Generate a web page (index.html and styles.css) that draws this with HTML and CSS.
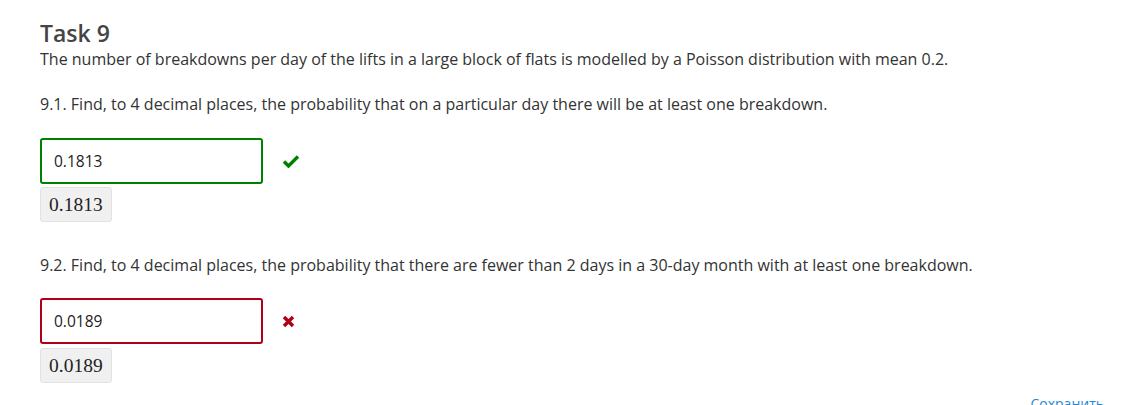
FILE: index.html
```html
<!DOCTYPE html>
<html>
<head>
<meta charset="utf-8">
<link rel="stylesheet" href="styles.css">
</head>
<body>
<div class="task">
  <h2 class="title">Task 9</h2>
  <p class="intro">The number of breakdowns per day of the lifts in a large block of flats is modelled by a Poisson distribution with mean 0.2.</p>

  <div class="part first">
    <p class="question">9.1. Find, to 4 decimal places, the probability that on a particular day there will be at least one breakdown.</p>
    <div class="answer-row">
      <input class="answer correct" type="text" value="0.1813">
      <svg class="mark" width="18" height="14" viewBox="0 0 18 14"><path d="M2 7.5 L6.5 12 L16 2.5" fill="none" stroke="#008000" stroke-width="3.4"/></svg>
    </div>
    <div class="preview">0.1813</div>
  </div>

  <div class="part second">
    <p class="question">9.2. Find, to 4 decimal places, the probability that there are fewer than 2 days in a 30-day month with at least one breakdown.</p>
    <div class="answer-row">
      <input class="answer wrong" type="text" value="0.0189">
      <svg class="mark cross" width="13" height="13" viewBox="0 0 13 13"><path d="M2 2 L11 11 M11 2 L2 11" fill="none" stroke="#b00018" stroke-width="3.4"/></svg>
    </div>
    <div class="preview">0.0189</div>
  </div>

  <div class="footer"><a class="save" href="#">Сохранить</a></div>
</div>
</body>
</html>
```
FILE: styles.css
```css
html, body {
  margin: 0;
  padding: 0;
  background: #fff;
}
body {
  font-family: "Open Sans", "Liberation Sans", sans-serif;
  font-size: 16px;
  color: #333;
  overflow: hidden;
}
.task {
  padding: 18px 0 0 40px;
}
.title {
  margin: 0;
  font-size: 23px;
  font-weight: 600;
  line-height: 30px;
  color: #444;
}
.intro {
  margin: 0;
  line-height: 22px;
}
.part.first {
  margin-top: 23px;
}
.part.second {
  margin-top: 32px;
}
.question {
  margin: 0;
  line-height: 22px;
}
.answer-row {
  margin-top: 22px;
  display: flex;
  align-items: center;
  gap: 19px;
}
.part.first .answer-row {
  margin-top: 23px;
}
.answer {
  box-sizing: border-box;
  width: 223px;
  height: 46px;
  border: 2px solid #008000;
  border-radius: 3px;
  padding: 0 12px;
  font-family: "Open Sans", "Liberation Sans", sans-serif;
  font-size: 15.5px;
  color: #222;
  outline: none;
  background: #fff;
}
.answer.wrong {
  border-color: #b00018;
}
.mark {
  display: block;
}
.preview {
  display: inline-block;
  margin-top: 3px;
  padding: 4px 8px;
  background: #f0f0f0;
  border: 1px solid #e2e2e2;
  border-radius: 3px;
  font-family: "Liberation Serif", "Times New Roman", serif;
  font-size: 19.5px;
  line-height: 25px;
  color: #222;
}
.part.second .preview {
  margin-top: 4px;
}
.footer {
  display: flex;
  justify-content: flex-end;
  margin-top: 11px;
  padding-right: 28px;
}
.save {
  color: #2a85cf;
  text-decoration: none;
  font-size: 14px;
}
```
